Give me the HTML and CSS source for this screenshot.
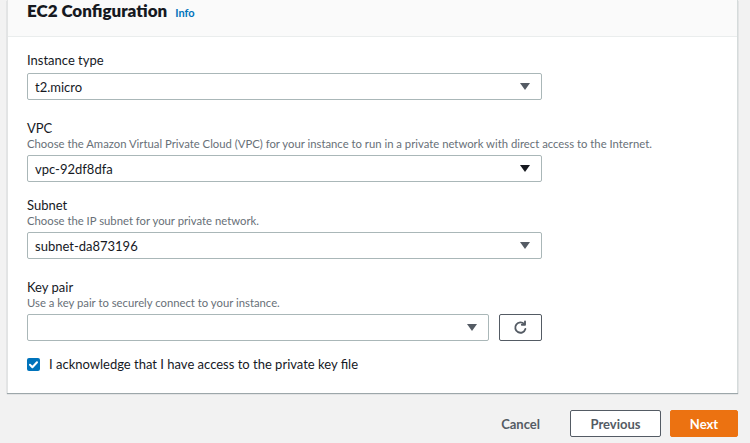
FILE: index.html
```html
<!DOCTYPE html>
<html>
<head>
<meta charset="utf-8">
<link rel="stylesheet" href="styles.css">
</head>
<body>
<div class="page">
  <section class="card">
    <header class="card-header">
      <h2 class="title">EC2 Configuration</h2>
      <a class="info">Info</a>
    </header>
    <div class="card-body">
      <div class="field f-instance">
        <div class="label">Instance type</div>
        <div class="select"><span class="value">t2.micro</span><span class="caret"></span></div>
      </div>
      <div class="field f-vpc">
        <div class="label">VPC</div>
        <div class="desc">Choose the Amazon Virtual Private Cloud (VPC) for your instance to run in a private network with direct access to the Internet.</div>
        <div class="select"><span class="value">vpc-92df8dfa</span><span class="caret dark"></span></div>
      </div>
      <div class="field f-subnet">
        <div class="label">Subnet</div>
        <div class="desc">Choose the IP subnet for your private network.</div>
        <div class="select"><span class="value">subnet-da873196</span><span class="caret"></span></div>
      </div>
      <div class="field f-key">
        <div class="label">Key pair</div>
        <div class="desc">Use a key pair to securely connect to your instance.</div>
        <div class="key-row">
          <div class="select key-select"><span class="value"></span><span class="caret"></span></div>
          <button class="refresh" aria-label="Refresh">
            <svg width="15" height="15" viewBox="0 0 16 16" fill="none" stroke="#545b64" stroke-width="2" stroke-linecap="round" stroke-linejoin="round">
              <path d="M13.2 9.6A5.5 5.5 0 1 1 12 4.4"/>
              <path d="M12.8 1.6v3.4H9.4"/>
            </svg>
          </button>
        </div>
      </div>
      <label class="ack">
        <span class="checkbox">
          <svg width="13" height="13" viewBox="0 0 13 13"><path d="M3 6.8l2.4 2.4L10 4.2" fill="none" stroke="#fff" stroke-width="2" stroke-linecap="round" stroke-linejoin="round"/></svg>
        </span>
        <span class="ack-text">I acknowledge that I have access to the private key file</span>
      </label>
    </div>
  </section>
  <footer class="actions">
    <button class="btn link">Cancel</button>
    <button class="btn normal">Previous</button>
    <button class="btn primary">Next</button>
  </footer>
</div>
</body>
</html>
```
FILE: styles.css
```css
* { box-sizing: border-box; }
html, body { margin: 0; padding: 0; }
body {
  background: #f2f2f2;
  font-family: "Lato", "Open Sans", sans-serif;
  color: #16191f;
  width: 750px;
  height: 443px;
  overflow: hidden;
}
.page {
  padding: 0 12px 0 7px;
}
.card {
  background: #fff;
  border-left: 1px solid #e2e4e4;
  border-right: 1px solid #d5dbdb;
  box-shadow: 0 1px 1px 0 rgba(0, 28, 36, 0.35);
}
.card-header {
  height: 37px;
  background: #fafafa;
  border-bottom: 1px solid #eaeded;
  display: flex;
  align-items: baseline;
  padding: 0 19px;
}
.title {
  margin: 0;
  font-size: 17px;
  line-height: 21px;
  font-weight: 800;
  color: #16191f;
}
.info {
  margin-left: 8px;
  font-size: 11px;
  font-weight: 700;
  color: #0073bb;
}
.card-body {
  padding: 14px 19px 20px;
  display: flex;
  flex-direction: column;
}
.field { display: flex; flex-direction: column; }
.f-vpc { margin-top: 19px; }
.f-subnet { margin-top: 14px; }
.f-key { margin-top: 19px; }
.label {
  font-size: 13px;
  line-height: 18px;
  color: #16191f;
}
.desc {
  font-size: 11.3px;
  line-height: 14px;
  color: #687078;
}
.select {
  margin-top: 4px;
  width: 515px;
  height: 27px;
  border: 1px solid #aab7b8;
  border-radius: 2px;
  display: flex;
  align-items: center;
  justify-content: space-between;
  padding: 0 11px 0 7px;
  font-size: 13px;
  color: #16191f;
}
.caret {
  width: 0;
  height: 0;
  border-left: 5px solid transparent;
  border-right: 5px solid transparent;
  border-top: 7px solid #545b64;
}
.caret.dark { border-top-color: #16191f; }
.key-row {
  margin-top: 4px;
  display: flex;
  gap: 10px;
}
.key-row .select { margin-top: 0; width: 462px; }
.refresh {
  width: 43px;
  height: 27px;
  border: 1px solid #545b64;
  border-radius: 2px;
  background: #fff;
  display: flex;
  align-items: center;
  justify-content: center;
  padding: 0;
}
.ack {
  margin-top: 14px;
  display: flex;
  align-items: center;
  gap: 9px;
  font-size: 13px;
  line-height: 18px;
}
.checkbox {
  width: 13px;
  height: 13px;
  border-radius: 2px;
  background: #0073bb;
  display: flex;
}
.actions {
  display: flex;
  justify-content: flex-end;
  align-items: center;
  gap: 9px;
  margin-top: 17px;
}
.btn {
  height: 27px;
  border-radius: 2px;
  font-family: inherit;
  font-size: 13px;
  font-weight: 700;
  padding: 0 18px;
  border: 1px solid transparent;
}
.btn.link { background: transparent; color: #545b64; padding: 0 20px; }
.btn.normal { background: #fff; border-color: #545b64; color: #545b64; width: 91px; }
.btn.primary { background: #ec7211; border-color: #ec7211; color: #fff; width: 68px; }
```
